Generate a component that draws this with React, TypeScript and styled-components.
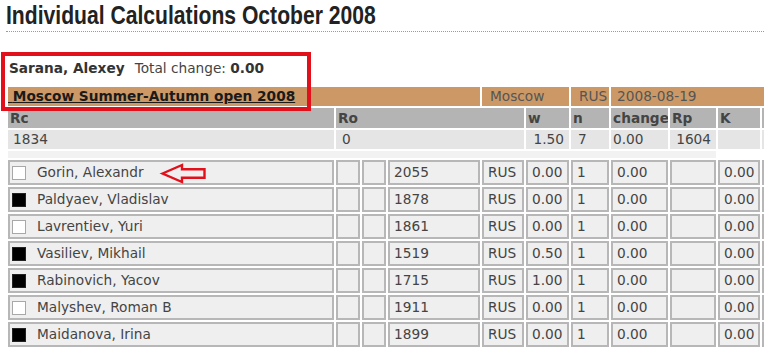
import React from 'react';
import styled, { createGlobalStyle } from 'styled-components';

const GlobalStyle = createGlobalStyle`
  html, body {
    margin: 0;
    padding: 0;
    background: #fff;
    overflow: hidden;
  }

  body {
    font-family: 'DejaVu Sans', Verdana, sans-serif;
  }
`;

const Page = styled.div`
  position: relative;
  width: 764px;
  height: 351px;
  padding-left: 6px;
  box-sizing: border-box;
  overflow: hidden;
`;

const Title = styled.h1`
  margin: 0;
  padding: 2px 0 3px;
  font-family: 'Liberation Sans', Arial, sans-serif;
  font-weight: bold;
  font-size: 25px;
  line-height: 26px;
  color: #222;
  border-bottom: 1px dotted #9a9a9a;
  white-space: nowrap;
`;

/* the heading face is a narrow cut; squeeze the sans to the same width */
const TitleText = styled.span`
  display: inline-block;
  transform: scaleX(0.845);
  transform-origin: left center;
`;

const Summary = styled.div`
  margin-top: 26px;
  padding-left: 3px;
  height: 20px;
  line-height: 20px;
  font-size: 13.7px;
  color: #444;
  white-space: nowrap;
`;

const PlayerName = styled.b`
  color: #333;
  margin-right: 10px;
`;

const Total = styled.b`
  color: #333;
`;

const Grid = styled.table`
  margin-top: 7px;
  border-collapse: separate;
  border-spacing: 2px;
  table-layout: fixed;
  width: 818px;
  font-size: 13.7px;
  color: #444;
  white-space: nowrap;
`;

const EventCell = styled.td<{ $inset?: number }>`
  background: #cc9966;
  padding: 0 0 0 ${({ $inset = 8 }) => $inset}px;
  line-height: 19px;
  color: #555;
  overflow: hidden;
`;

const EventLink = styled.a`
  font-weight: bold;
  color: #1a1a1a;
  text-decoration: underline;
`;

const HeadCell = styled.td`
  background: #b4b4b4;
  padding: 0 2px;
  line-height: 20px;
  font-weight: bold;
  color: #444;
  overflow: hidden;
`;

const DataCell = styled.td<{ $align?: 'left' | 'right'; $inset?: number }>`
  background: #e5e5e5;
  padding: 0 ${({ $align }) => ($align === 'right' ? 5 : 0)}px 0
    ${({ $inset = 5 }) => $inset}px;
  line-height: 19px;
  text-align: ${({ $align = 'left' }) => $align};
  overflow: hidden;
`;

const SpacerCell = styled.td`
  background: #f2f2f2;
  height: 7px;
  padding: 0;
  line-height: 0;
`;

const PlayerCell = styled.td<{ $inset?: number }>`
  background: #efefef;
  border: 2px solid #b7b7b7;
  padding: 0 0 0 ${({ $inset = 4 }) => $inset}px;
  line-height: 21px;
  overflow: hidden;
`;

const Swatch = styled.span<{ $black: boolean }>`
  display: inline-block;
  width: 12px;
  height: 12px;
  margin-right: 11px;
  vertical-align: middle;
  border: 1px solid ${({ $black }) => ($black ? '#222' : '#a8a8a8')};
  background: ${({ $black }) => ($black ? '#000' : '#fff')};
`;

const Highlight = styled.div`
  position: absolute;
  left: 1px;
  top: 52px;
  width: 310px;
  height: 59px;
  box-sizing: border-box;
  border: 4px solid #e2101b;
  pointer-events: none;
`;

const Pointer = styled.svg`
  position: absolute;
  left: 158px;
  top: 161px;
`;

const columns = [326, 24, 24, 92, 42, 43, 38, 57, 46, 42, 60];

const opponents = [
  { name: 'Gorin, Alexandr', black: false, rating: '2055', score: '0.00' },
  { name: 'Paldyaev, Vladislav', black: true, rating: '1878', score: '0.00' },
  { name: 'Lavrentiev, Yuri', black: false, rating: '1861', score: '0.00' },
  { name: 'Vasiliev, Mikhail', black: true, rating: '1519', score: '0.50' },
  { name: 'Rabinovich, Yacov', black: true, rating: '1715', score: '1.00' },
  { name: 'Malyshev, Roman B', black: false, rating: '1911', score: '0.00' },
  { name: 'Maidanova, Irina', black: true, rating: '1899', score: '0.00' },
];

export default function App() {
  return (
    <Page>
      <GlobalStyle />
      <Title>
        <TitleText>Individual Calculations October 2008</TitleText>
      </Title>
      <Summary>
        <PlayerName>Sarana, Alexey</PlayerName>
        Total change: <Total>0.00</Total>
      </Summary>
      <Grid>
        <colgroup>
          {columns.map((w, i) => (
            <col key={`col-${i}`} style={{ width: w }} />
          ))}
        </colgroup>
        <tbody>
          <tr>
            <EventCell colSpan={4} $inset={0}>
              <EventLink>{'\u00a0'}Moscow Summer-Autumn open 2008</EventLink>
            </EventCell>
            <EventCell colSpan={2}>Moscow</EventCell>
            <EventCell>RUS</EventCell>
            <EventCell colSpan={4} $inset={6}>
              2008-08-19
            </EventCell>
          </tr>
          <tr>
            <HeadCell>Rc</HeadCell>
            <HeadCell colSpan={4}>Ro</HeadCell>
            <HeadCell>w</HeadCell>
            <HeadCell>n</HeadCell>
            <HeadCell>change</HeadCell>
            <HeadCell>Rp</HeadCell>
            <HeadCell>K</HeadCell>
            <HeadCell />
          </tr>
          <tr>
            <DataCell>1834</DataCell>
            <DataCell colSpan={4} $inset={6}>
              0
            </DataCell>
            <DataCell $align="right">1.50</DataCell>
            <DataCell $inset={7}>7</DataCell>
            <DataCell $inset={2}>0.00</DataCell>
            <DataCell $align="right">1604</DataCell>
            <DataCell />
            <DataCell />
          </tr>
          <tr>
            <SpacerCell colSpan={9} />
          </tr>
          {opponents.map((p) => (
            <tr key={p.name}>
              <PlayerCell $inset={2}>
                <Swatch $black={p.black} />
                {p.name}
              </PlayerCell>
              <PlayerCell />
              <PlayerCell />
              <PlayerCell>{p.rating}</PlayerCell>
              <PlayerCell>RUS</PlayerCell>
              <PlayerCell>{p.score}</PlayerCell>
              <PlayerCell>1</PlayerCell>
              <PlayerCell>0.00</PlayerCell>
              <PlayerCell />
              <PlayerCell>0.00</PlayerCell>
              <PlayerCell />
            </tr>
          ))}
        </tbody>
      </Grid>
      <Highlight />
      <Pointer width="52" height="26" viewBox="0 0 52 26">
        <path
          d="M4.5 12.5 L24 4 L24 8.2 L46.5 8.2 L46.5 16.8 L24 16.8 L24 21 Z"
          fill="none"
          stroke="#e2101b"
          strokeWidth="2.4"
          strokeLinejoin="miter"
        />
      </Pointer>
    </Page>
  );
}
